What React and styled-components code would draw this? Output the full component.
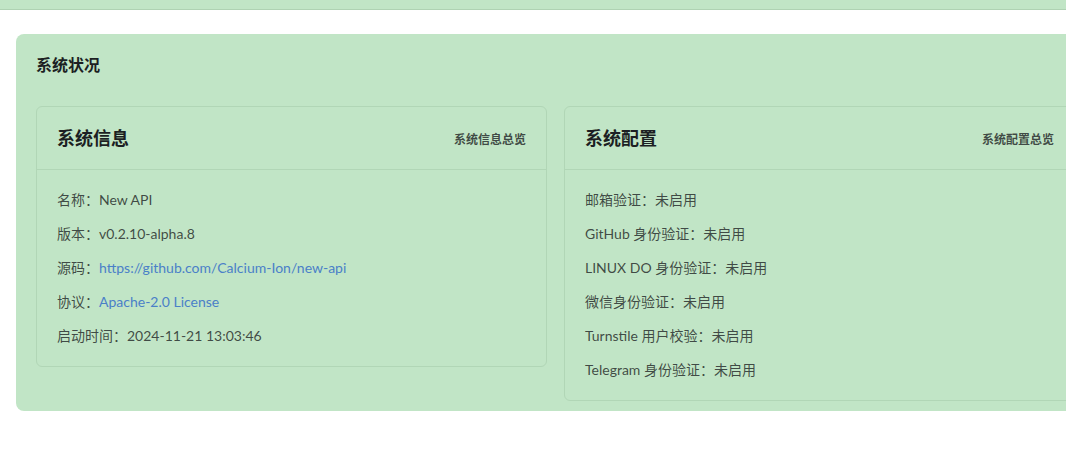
import React from 'react';
import styled, { createGlobalStyle } from 'styled-components';

const GlobalStyle = createGlobalStyle`
  html, body {
    margin: 0;
    padding: 0;
    background: #ffffff;
    overflow: hidden;
  }
  body {
    font-family: Lato, "Noto Sans CJK SC", "Noto Sans", sans-serif;
    color: rgba(28, 31, 35, 1);
  }
`;

const Page = styled.div`
  width: 1066px;
  height: 465px;
  overflow: hidden;
`;

const TopBar = styled.div`
  height: 9px;
  background: #c1e5c6;
  border-bottom: 1px solid #afd2b3;
`;

const Content = styled.main`
  padding: 24px 0 0 16px;
`;

const Panel = styled.section`
  width: 1079px;
  box-sizing: border-box;
  background: #c1e5c6;
  border-radius: 8px;
  padding: 19px 20px 10px;
`;

const PanelTitle = styled.h2`
  margin: 0 0 29px;
  font-size: 16px;
  line-height: 24px;
  font-weight: 700;
  color: rgba(28, 31, 35, 1);
`;

const CardGrid = styled.div`
  display: grid;
  grid-template-columns: 511px 511px;
  column-gap: 17px;
  align-items: start;
`;

const Card = styled.div`
  border: 1px solid #b1d6b6;
  border-radius: 6px;
`;

const CardHeader = styled.div`
  display: flex;
  align-items: center;
  justify-content: space-between;
  padding: 20px;
  height: 63px;
  box-sizing: border-box;
  border-bottom: 1px solid #b1d6b6;
`;

const CardTitle = styled.h3`
  margin: 0;
  font-size: 18px;
  line-height: 24px;
  font-weight: 700;
  color: rgba(28, 31, 35, 1);
`;

const CardExtra = styled.span`
  font-size: 12px;
  font-weight: 700;
  color: rgba(28, 31, 35, 0.8);
`;

const CardBody = styled.div`
  display: flex;
  flex-direction: column;
  gap: 14px;
  padding: 20px;
`;

const Row = styled.p`
  margin: 0;
  font-size: 14px;
  line-height: 20px;
  color: rgba(28, 31, 35, 0.8);
`;

const Link = styled.a`
  color: #4a80c8;
  text-decoration: none;
`;

const info = [
  { label: '名称', value: 'New API' },
  { label: '版本', value: 'v0.2.10-alpha.8' },
  { label: '源码', value: 'https://github.com/Calcium-Ion/new-api', link: true },
  { label: '协议', value: 'Apache-2.0 License', link: true },
  { label: '启动时间', value: '2024-11-21 13:03:46' },
];

const config = [
  '邮箱验证',
  'GitHub 身份验证',
  'LINUX DO 身份验证',
  '微信身份验证',
  'Turnstile 用户校验',
  'Telegram 身份验证',
];

export default function App() {
  return (
    <Page>
      <GlobalStyle />
      <TopBar />
      <Content>
        <Panel>
          <PanelTitle>系统状况</PanelTitle>
          <CardGrid>
            <Card>
              <CardHeader>
                <CardTitle>系统信息</CardTitle>
                <CardExtra>系统信息总览</CardExtra>
              </CardHeader>
              <CardBody>
                {info.map((item) => (
                  <Row key={item.label}>
                    {item.label}：
                    {item.link ? <Link href="#">{item.value}</Link> : item.value}
                  </Row>
                ))}
              </CardBody>
            </Card>
            <Card>
              <CardHeader>
                <CardTitle>系统配置</CardTitle>
                <CardExtra>系统配置总览</CardExtra>
              </CardHeader>
              <CardBody>
                {config.map((name) => (
                  <Row key={name}>{name}：未启用</Row>
                ))}
              </CardBody>
            </Card>
          </CardGrid>
        </Panel>
      </Content>
    </Page>
  );
}
